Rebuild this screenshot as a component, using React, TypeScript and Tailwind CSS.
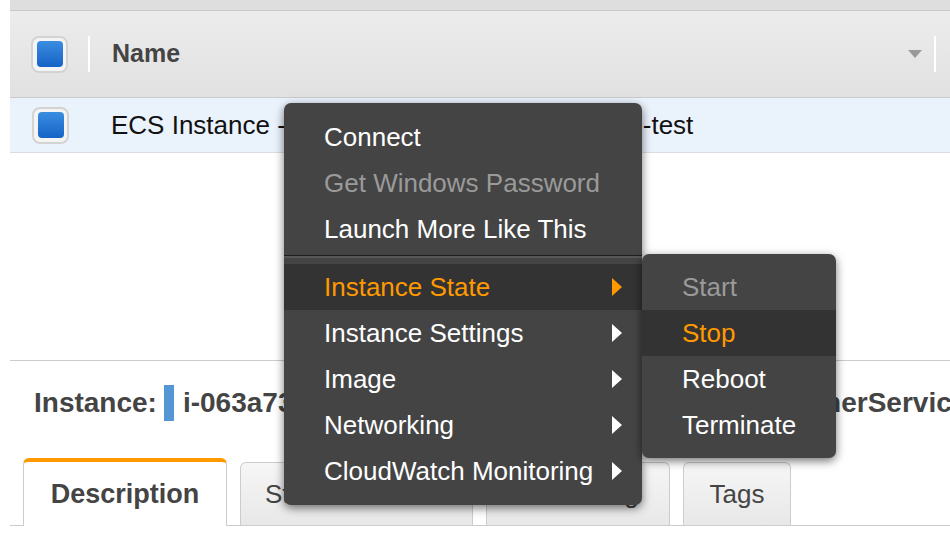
import React from "react";

const Check = () => (
  <div className="flex h-[37px] w-[37px] items-center justify-center rounded-[8px] border-2 border-[#d3d3d3] bg-[#f4f4f4]">
    <div className="h-[26px] w-[26px] rounded-[4px] bg-linear-to-b from-[#3b8de0] to-[#1463c6]" />
  </div>
);

const Arrow = ({ on }: { on?: boolean }) => (
  <svg width="10" height="18" viewBox="0 0 10 18" className={on ? "text-[#ff9900]" : "text-white"}>
    <path d="M0 0L10 9L0 18Z" fill="currentColor" />
  </svg>
);

const mainItems = [
  { label: "Instance State", sub: true, on: true },
  { label: "Instance Settings", sub: true },
  { label: "Image", sub: true },
  { label: "Networking", sub: true },
  { label: "CloudWatch Monitoring", sub: true },
];

const subItems = [
  { label: "Start", off: true },
  { label: "Stop", on: true },
  { label: "Reboot" },
  { label: "Terminate" },
];

export default function App() {
  return (
    <div className="relative h-[542px] w-[950px] overflow-hidden bg-white font-['Liberation_Sans',Arial,sans-serif]">
      <div className="ml-[10px] flex h-full flex-col">
        <div className="h-[11px] shrink-0 border-b border-[#c8c8c8] bg-[#dedede]" />
        {/* table header */}
        <div className="flex h-[87px] shrink-0 items-center border-b border-[#cbcbcb] bg-linear-to-b from-[#ececec] to-[#e1e1e1] pl-[21px]">
          <Check />
          <div className="ml-[20px] h-[36px] w-[2px] bg-white" />
          <span className="ml-[22px] text-[25px] font-bold text-[#444]">Name</span>
          <div className="ml-auto mr-[14px] flex items-center">
            <svg width="14" height="8" viewBox="0 0 14 8">
              <path d="M0 0H14L7 8Z" fill="#9a9a9a" />
            </svg>
            <div className="ml-[12px] h-[36px] w-[2px] bg-white" />
          </div>
        </div>
        {/* selected row */}
        <div className="flex h-[55px] shrink-0 items-center border-b border-[#d9dde3] bg-[#eaf2fc] pl-[22px]">
          <Check />
          <span className="ml-[42px] whitespace-nowrap text-[26px] text-[#111]">
            ECS Instance - EC2ContainerService-cluster1-test
          </span>
        </div>
        <div className="h-[207px] shrink-0" />
        {/* details */}
        <div className="flex h-[98px] shrink-0 items-center border-t border-[#cccccc] pb-[13px] pl-[24px] text-[28px] font-bold text-[#444]">
          <span className="whitespace-nowrap">Instance:</span>
          <span className="ml-[7px] h-[36px] w-[10px] shrink-0 bg-[#5596d4]" />
          <span className="ml-[9px] whitespace-nowrap">
            i-063a73f2c1d9e8b54 (ECS Instance - EC2ContainerService-cluster1-test)
          </span>
        </div>
        <div className="flex h-[68px] shrink-0 items-end gap-[13px] border-b border-[#cccccc] pl-[13px]">
          <div className="relative -mb-px flex h-[68px] w-[204px] items-center justify-center rounded-t-[6px] border-x border-t-4 border-[#cccccc] border-t-[#ff9900] bg-white text-[27px] font-bold text-[#444]">
            Description
          </div>
          <div className="flex h-[63px] w-[233px] items-center rounded-t-[6px] border-x border-t border-[#cccccc] bg-linear-to-b from-[#f6f6f6] to-[#e8e8e8] pl-[24px] text-[26px] text-[#444]">
            Status Checks
          </div>
          <div className="flex h-[63px] w-[184px] items-center justify-center rounded-t-[6px] border-x border-t border-[#cccccc] bg-linear-to-b from-[#f6f6f6] to-[#e8e8e8] text-[26px] text-[#444]">
            Monitoring
          </div>
          <div className="flex h-[63px] w-[108px] items-center justify-center rounded-t-[6px] border-x border-t border-[#cccccc] bg-linear-to-b from-[#f6f6f6] to-[#e8e8e8] text-[26px] text-[#444]">
            Tags
          </div>
        </div>
      </div>

      {/* context menu */}
      <div className="absolute left-[284px] top-[103px] w-[358px] rounded-[7px] bg-[#444444] py-[11px] text-[26px] shadow-[0_3px_10px_rgba(0,0,0,0.55)]">
        <div className="flex h-[46px] items-center pl-[40px] text-white">Connect</div>
        <div className="flex h-[46px] items-center pl-[40px] text-[#9a9a9a]">Get Windows Password</div>
        <div className="flex h-[46px] items-center pl-[40px] text-white">Launch More Like This</div>
        <div className="h-[12px] pt-[3px]">
          <div className="h-px bg-[#1e1e1e]" />
          <div className="h-[2px] bg-[#575757]" />
        </div>
        {mainItems.map((it) => (
          <div
            key={it.label}
            className={`flex h-[46px] items-center justify-between pl-[40px] pr-[20px] ${
              it.on ? "bg-[#333333] text-[#ff9900]" : "text-white"
            }`}
          >
            <span className="whitespace-nowrap">{it.label}</span>
            <Arrow on={it.on} />
          </div>
        ))}

        <div className="absolute left-[358px] top-[151px] w-[194px] rounded-[7px] bg-[#444444] py-[10px] shadow-[0_3px_10px_rgba(0,0,0,0.55)]">
          {subItems.map((it) => (
            <div
              key={it.label}
              className={`flex h-[46px] items-center pl-[40px] ${
                it.on ? "bg-[#333333] text-[#ff9900]" : it.off ? "text-[#9a9a9a]" : "text-white"
              }`}
            >
              {it.label}
            </div>
          ))}
        </div>
      </div>
    </div>
  );
}
